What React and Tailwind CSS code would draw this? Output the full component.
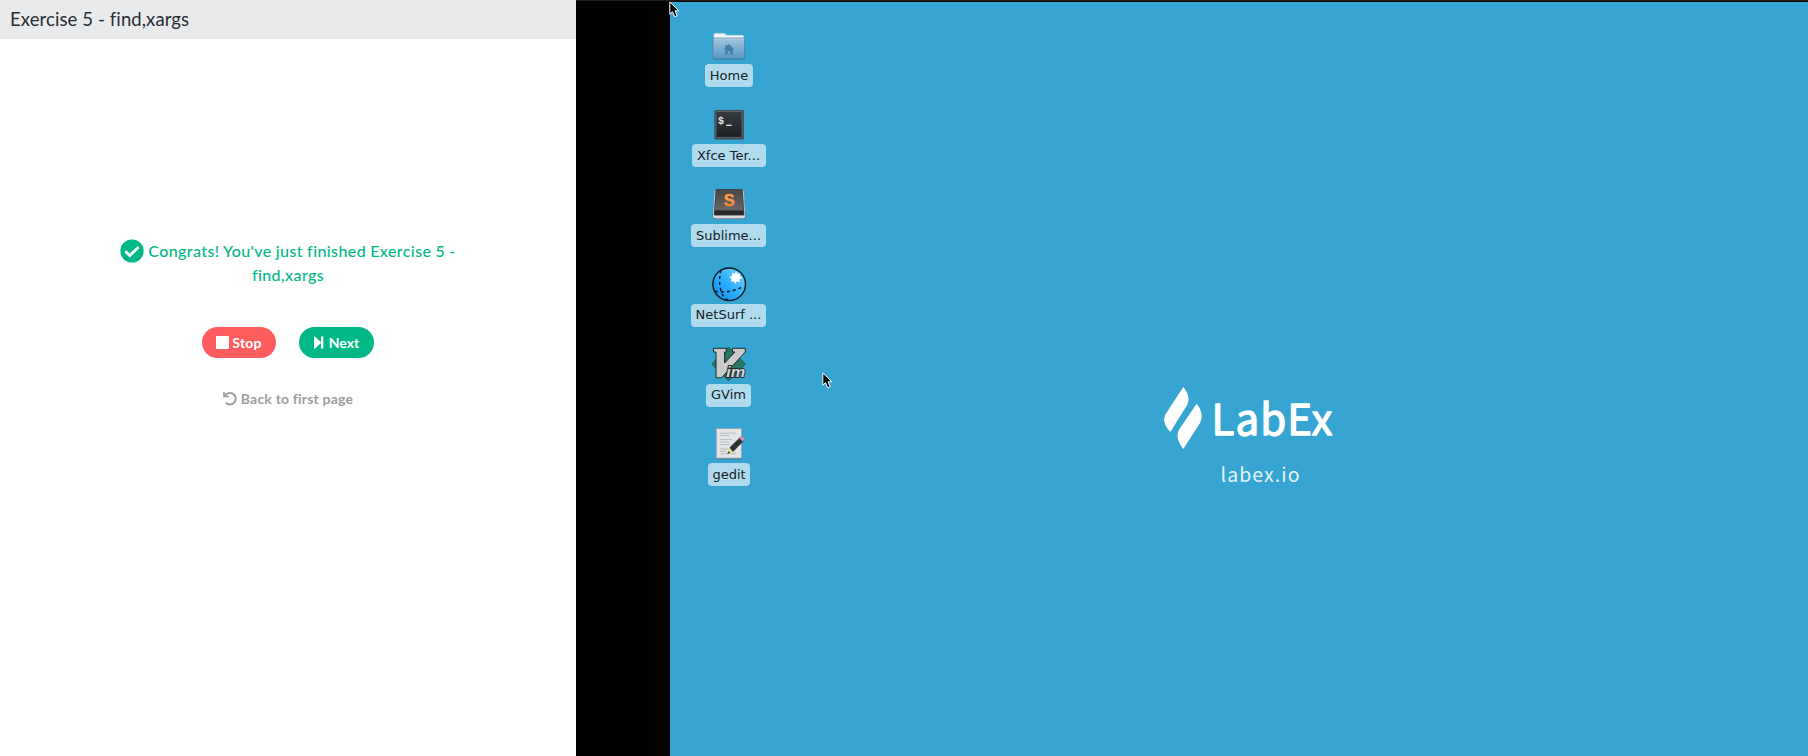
import React from 'react';

function HomeIcon() {
  return (
    <svg width="36" height="36" viewBox="0 0 36 36">
      <defs>
        <linearGradient id="folder" x1="0" y1="0" x2="0" y2="1">
          <stop offset="0" stopColor="#a5c6dc" />
          <stop offset="1" stopColor="#5596c4" />
        </linearGradient>
      </defs>
      <g transform="translate(-.5 1)">
        <path d="M3 9V5Q3 3.5 4.5 3.5H14Q15 3.5 15.3 5.5H32Q33.5 5.5 33.5 7V12H3Z" fill="#f4f4f4" stroke="#cbd3d8" strokeWidth=".5" />
        <path d="M2 30h33" stroke="#286f92" strokeWidth="1.4" opacity=".6" />
        <rect x="2" y="8.3" width="32.5" height="21.4" rx="1" fill="url(#folder)" stroke="#4a82a8" strokeWidth=".8" />
        <path d="M3 9.3H33.5" stroke="#c5dae8" strokeWidth=".7" />
        <path d="M18.5 14.5L24 20H22.3V25H19.8V21.5H17.2V25H14.7V20H13L15 18V15.5H16.5V16.5Z" fill="#417fa8" />
      </g>
    </svg>
  );
}

function TerminalIcon() {
  return (
    <svg width="36" height="36" viewBox="0 0 36 36">
      <defs>
        <linearGradient id="term" x1="0" y1="0" x2="0" y2="1">
          <stop offset="0" stopColor="#353d3f" />
          <stop offset="1" stopColor="#1b2023" />
        </linearGradient>
      </defs>
      <rect x="3.3" y="4" width="29.6" height="29.6" rx="1.5" fill="#434c50" />
      <rect x="5" y="5.4" width="26" height="26" rx=".5" fill="url(#term)" stroke="#687276" strokeWidth=".8" />
      <text x="7" y="17.5" fontSize="10" fontWeight="700" fill="#e8eaea" fontFamily="Liberation Mono">$</text>
      <path d="M15.2 19.3H20.7" stroke="#e8eaea" strokeWidth="1.3" />
    </svg>
  );
}

function SublimeIcon() {
  return (
    <svg width="36" height="36" viewBox="0 0 36 36">
      <defs>
        <linearGradient id="subl" x1="0" y1="0" x2="0" y2="1">
          <stop offset="0" stopColor="#474747" />
          <stop offset="1" stopColor="#686868" />
        </linearGradient>
        <linearGradient id="sublS" x1="0" y1="0" x2="0" y2="1">
          <stop offset="0" stopColor="#ffb566" />
          <stop offset="1" stopColor="#ff7a20" />
        </linearGradient>
      </defs>
      <path d="M4 5Q4.2 3 6 3H30Q32 3 32.3 5L34.5 29.5Q34.6 33 31.5 33H4.5Q1.3 33 1.7 29.5Z" fill="#3f4649" />
      <path d="M2 27V30Q2 32.5 4.5 32.5H31.5Q34.2 32.5 34.2 30V27L33 29.5H3.3Z" fill="#d7dddf" />
      <path d="M4 4.5L2.4 28M32.3 4.5L33.8 28" stroke="#b5c8cf" strokeWidth="1" />
      <path d="M5.5 4H30.7L32.2 24.5H4Z" fill="url(#subl)" />
      <path d="M4 24.5H32.2L32.7 29H3.4Z" fill="#292929" />
      <text x="18.2" y="20" textAnchor="middle" fontSize="16.5" fontWeight="700" fill="url(#sublS)" stroke="#f58a3a" strokeWidth=".4" fontFamily="Liberation Sans">S</text>
    </svg>
  );
}

function GlobeIcon() {
  return (
    <svg width="36" height="36" viewBox="0 0 36 36">
      <defs>
        <linearGradient id="globe" x1="1" y1="0" x2="0" y2="1">
          <stop offset="0" stopColor="#7ed7ff" />
          <stop offset=".5" stopColor="#2fb0ff" />
          <stop offset="1" stopColor="#098de5" />
        </linearGradient>
      </defs>
      <circle cx="18.2" cy="18.3" r="16.3" fill="url(#globe)" stroke="#071820" strokeWidth="1.4" />
      <path d="M10 4Q7.5 14 9.5 23T17.5 34" fill="none" stroke="#071820" strokeWidth="1.4" strokeDasharray="3 3" />
      <path d="M4 25Q15 28.5 33 20.5" fill="none" stroke="#071820" strokeWidth="1.4" strokeDasharray="3 3" />
      <path d="M25 5.5L26.5 8L29.4 7L28.8 10L31 12L28.4 13.3L28.8 16.2L26 15.3L24.2 17.8L22.6 15.3L19.8 15.8L20.7 13L18.6 11L21.3 9.6L20.8 6.8L23.6 8Z" fill="#fff" />
    </svg>
  );
}

function VimIcon() {
  return (
    <svg width="36" height="36" viewBox="0 0 36 36">
      <path d="M17.5 1L34.5 18L17.5 35L.8 18Z" fill="#297762" stroke="#174b3e" strokeWidth=".8" />
      <path d="M2.5 2.3H15.3V6H13.6V17L24 6H21.5V2.3H34.3V6L10.5 31.8H5V6H2.5Z" fill="#c8cacc" stroke="#22292b" strokeWidth="1" strokeLinejoin="round" />
      <text x="15.3" y="30.8" fontSize="15" fontStyle="italic" fontWeight="700" fill="#d2d4d5" stroke="#252b2c" strokeWidth="1.8" paintOrder="stroke" textLength="19" lengthAdjust="spacingAndGlyphs" fontFamily="Liberation Sans">im</text>
    </svg>
  );
}

function GeditIcon() {
  return (
    <svg width="36" height="36" viewBox="0 0 36 36">
      <path d="M4.7 33.9H31" stroke="#50656e" strokeWidth="1" opacity=".7" />
      <rect x="5.2" y="3.5" width="25.4" height="29.6" fill="#e3e4e5" stroke="#8b9ba2" strokeWidth=".7" />
      <path d="M9 8.2H25M9 10.5H18M9 14.5H21M9 17H18M9 19.5H19M9 24H20M9 26.3H15M9 28.7H25" stroke="#b6b8ba" strokeWidth=".9" />
      <path d="M17 26.5L19 23L21.3 26.5L18 28.7Z" fill="#edda72" />
      <path d="M19 22.4L29 12.7L32.3 16L22 26.5Z" fill="#303335" stroke="#1e2122" strokeWidth=".7" />
      <path d="M28.5 13.2L30 11.7Q31.5 11 32.7 12.2Q34 13.6 33 15L31.7 16.4Z" fill="#cd91bd" stroke="#8c7581" strokeWidth=".5" />
      <path d="M16.2 29L17.5 26.2L19 27.7Z" fill="#222" />
    </svg>
  );
}

const shortcuts = [
  { label: 'Home', Icon: HomeIcon, width: 'w-[48px]', height: 'h-[58px]', shift: 'ml-px' },
  { label: 'Xfce Ter...', Icon: TerminalIcon, width: 'w-[74px]', height: 'h-[61px]', shift: '' },
  { label: 'Sublime...', Icon: SublimeIcon, width: 'w-[75px]', height: 'h-[61px]', shift: '' },
  { label: 'NetSurf ...', Icon: GlobeIcon, width: 'w-[75px]', height: 'h-[61px]', shift: '' },
  { label: 'GVim', Icon: VimIcon, width: 'w-[45px]', height: 'h-[61px]', shift: '' },
  { label: 'gedit', Icon: GeditIcon, width: 'w-[42px]', height: 'h-[61px]', shift: 'ml-px' },
];

function Cursor({ className }) {
  return (
    <svg className={className} width="11" height="18" viewBox="0 0 11 18">
      <path d="M.8 1V13.2L3.5 10.7L5.7 15.8L8.2 14.7L6 9.8H9.8Z" fill="#000" stroke="#fff" strokeWidth="1" />
    </svg>
  );
}

function LessonPanel() {
  return (
    <section className="flex w-[576px] shrink-0 flex-col bg-white font-['Lato',sans-serif]">
      <header className="flex h-[39px] shrink-0 items-center bg-[#e9eaec] pl-[10px] text-[18.5px] tracking-[0.1px] text-[#292e35]">
        <h1>Exercise 5 - find,xargs</h1>
      </header>
      <div className="flex flex-col items-center pt-[200px]">
        <div className="flex w-[340px] flex-col items-center text-[16px] leading-6 font-medium tracking-[0.4px] text-[#00b887]">
          <div className="flex items-center gap-1 whitespace-nowrap">
            <svg width="24" height="24" viewBox="0 0 24 24" className="shrink-0">
              <circle cx="12" cy="12" r="11.6" fill="#00b887" />
              <path d="M5.3 12.3L9.8 16.6L18.6 8" fill="none" stroke="#fff" strokeWidth="2.8" />
            </svg>
            <span className="[word-spacing:-0.3px]">Congrats! You've just finished Exercise 5 -</span>
          </div>
          <span>find,xargs</span>
        </div>
        <div className="mt-10 flex gap-[23px] text-[14px] font-bold text-white">
          <button className="flex h-[31px] w-[74px] items-center justify-center gap-[3px] rounded-full bg-[#ff5c5f]">
            <svg width="13" height="13" viewBox="0 0 13 13"><rect width="13" height="13" rx="1" fill="#fff" /></svg>
            <span className="tracking-[0.2px]">Stop</span>
          </button>
          <button className="flex h-[31px] w-[75px] items-center justify-center gap-[5px] rounded-full bg-[#00b887]">
            <svg width="10" height="13" viewBox="0 0 10 13"><path d="M0 1Q0 0 1 .7L7 6V.5H9.3V12.5H7V7L1 12.5Q0 13 0 12Z" fill="#fff" /></svg>
            <span>Next</span>
          </button>
        </div>
        <a className="mt-7 flex h-6 items-center gap-1 text-[14px] font-bold tracking-[0.2px] text-[#9d9d9d]">
          <svg width="14" height="15" viewBox="0 0 14 15" fill="none" stroke="#9d9d9d">
            <path d="M1.8 5A5.8 5.8 0 1 1 2.8 11.8" strokeWidth="2" />
            <path d="M1 1V5.5H6" strokeWidth="1.7" />
          </svg>
          <span>Back to first page</span>
        </a>
      </div>
    </section>
  );
}

function Desktop() {
  return (
    <section className="relative flex flex-1 border-t border-[#1f1f1f] bg-black">
      <div className="w-[94px] shrink-0" />
      <div className="mt-px flex flex-1 bg-[#36a5d2]">
        <div className="ml-[21px] flex w-[75px] flex-col gap-[18.9px] pt-[27px]">
          {shortcuts.map(({ label, Icon, width, height, shift }) => (
            <div key={label} className={`${height} flex flex-col items-center justify-between`}>
              <Icon />
              <div className={`${width} ${shift} flex h-[23px] shrink-0 items-center justify-center rounded-[4px] bg-[#afdbed] font-['DejaVu_Sans',sans-serif] text-[13px] whitespace-nowrap text-[#172126]`}>
                {label}
              </div>
            </div>
          ))}
        </div>
        <svg className="mt-[378px] ml-[394px] shrink-0" width="190" height="114" viewBox="1160 380 190 114" fill="#fff">
          <path d="M1183.3 387C1189 394 1190 400 1186.5 406L1170.3 432C1164 425 1162.5 419 1166 413.5Z" />
          <path d="M1196.6 403.8C1202 410 1203 417 1200 423L1183.3 449C1177 441 1176 434.5 1179.5 429Z" />
          <text x="1211.5" y="434.5" fontSize="42" fontWeight="400" fontFamily="Noto Sans CJK SC, sans-serif" stroke="#fff" strokeWidth="1.3" strokeLinejoin="round" textLength="121" lengthAdjust="spacing">LabEx</text>
          <text x="1220.5" y="482" fontSize="19.5" fontFamily="Noto Sans CJK SC, sans-serif" fillOpacity=".9" textLength="79" lengthAdjust="spacing">labex.io</text>
        </svg>
      </div>
      <Cursor className="absolute top-0 left-[93px]" />
      <Cursor className="absolute top-[371px] left-[246px]" />
    </section>
  );
}

export default function App() {
  return (
    <main className="flex h-screen w-full overflow-hidden">
      <LessonPanel />
      <Desktop />
    </main>
  );
}
